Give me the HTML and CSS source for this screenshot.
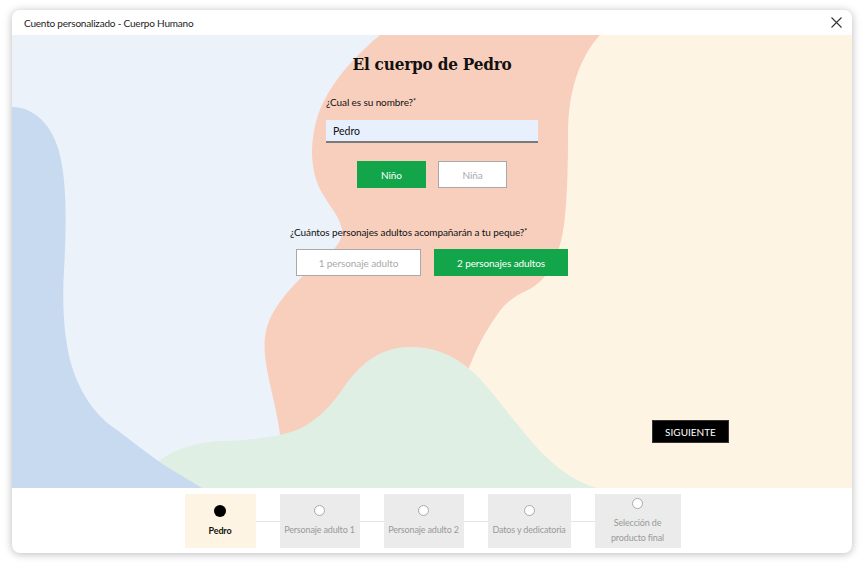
FILE: index.html
```html
<!DOCTYPE html>
<html>
<head>
    <title>Cuento personalizado - Cuerpo Humano</title>
    <link rel="stylesheet" href="styles.css">
</head>

<body>
    <div class="page">
        <div class="dialog">
            <div class="dialog-header">
                <span class="dialog-title">Cuento personalizado - Cuerpo Humano</span>
                <button class="close-btn" aria-label="Cerrar">
                    <svg width="11" height="11" viewBox="0 0 11 11">
                        <path d="M0.5 0.5 L10.5 10.5 M10.5 0.5 L0.5 10.5" stroke="#333" stroke-width="1.1" fill="none"/>
                    </svg>
                </button>
            </div>

            <div class="stage">
                <svg class="stage-art" viewBox="0 0 840 453" preserveAspectRatio="none">
                    <path fill="#F8CFBD" d="M368,0 C350,15 318,45 306,80 C298,105 298,130 306,150 C314,168 328,180 330,195 C332,215 300,230 282,250 C262,272 250,290 253,320 C256,350 268,380 270,420 L840,420 L840,0 Z"/>
                    <path fill="#FEF4E4" d="M588,0 C568,22 556,55 556,100 C556,150 554,190 548,210 C542,232 532,246 518,254 C505,260 494,266 485,280 C472,298 464,315 456,335 L430,453 L840,453 L840,0 Z"/>
                    <path fill="#E0EFE4" d="M90,453 L148,425 C165,413 185,407 210,406 C240,405 265,402 285,395 C305,386 318,372 330,355 C345,333 365,312 398,312 C425,312 445,322 462,338 C480,355 495,378 510,395 C530,420 555,445 585,453 Z"/>
                    <path fill="#C8DAF0" d="M0,72 C25,72 45,95 50,130 C55,160 54,200 52,235 C50,270 52,300 58,325 C66,355 82,380 105,395 C122,408 138,420 152,430 L190,453 L0,453 Z"/>
                </svg>

                <div class="stage-content">
                    <h1 class="book-title">El cuerpo de Pedro</h1>

                    <div class="field name-field">
                        <label for="kid-name">¿Cual es su nombre?<span class="req">*</span></label>
                        <input type="text" id="kid-name" value="Pedro">
                    </div>

                    <div class="choice-row gender-row">
                        <button class="choice choice-small active">Niño</button>
                        <button class="choice choice-small">Niña</button>
                    </div>

                    <div class="field adults-field">
                        <label>¿Cuántos personajes adultos acompañarán a tu peque?<span class="req">*</span></label>
                        <div class="choice-row adults-row">
                            <button class="choice choice-one">1 personaje adulto</button>
                            <button class="choice choice-two active">2 personajes adultos</button>
                        </div>
                    </div>

                    <div class="nav-row">
                        <button class="next-btn">SIGUIENTE</button>
                    </div>
                </div>
            </div>

            <div class="stepper">
                <div class="step step-1 current">
                    <span class="step-dot"></span>
                    <span class="step-label">Pedro</span>
                </div>
                <span class="step-line"></span>
                <div class="step step-2">
                    <span class="step-dot"></span>
                    <span class="step-label">Personaje adulto 1</span>
                </div>
                <span class="step-line"></span>
                <div class="step step-3">
                    <span class="step-dot"></span>
                    <span class="step-label">Personaje adulto 2</span>
                </div>
                <span class="step-line"></span>
                <div class="step step-4">
                    <span class="step-dot"></span>
                    <span class="step-label">Datos y dedicatoria</span>
                </div>
                <span class="step-line"></span>
                <div class="step step-5">
                    <span class="step-dot"></span>
                    <span class="step-label">Selección de<br>producto final</span>
                </div>
            </div>
        </div>
    </div>
</body>
</html>
```

FILE: styles.css
```css
body {
    margin: 0;
    background: #fff;
    font-family: Lato, "Open Sans", sans-serif;
    color: #111;
}

.page {
    padding: 10px 13px 14px 12px;
}

.dialog {
    width: 840px;
    height: 543px;
    background: #fff;
    border-radius: 8px;
    overflow: hidden;
    box-shadow: 0 1px 8px rgba(0, 0, 0, 0.28);
    display: flex;
    flex-direction: column;
}

.dialog-header {
    height: 25px;
    display: flex;
    align-items: center;
    justify-content: space-between;
    padding: 0 10px 0 12px;
    flex-shrink: 0;
}

.dialog-title {
    font-size: 10px;
    letter-spacing: -0.2px;
    color: #222;
}

.close-btn {
    border: none;
    background: none;
    padding: 0;
    width: 11px;
    height: 11px;
    display: flex;
}

/* ilustracion de fondo + formulario */
.stage {
    position: relative;
    height: 453px;
    background: #EBF2FA;
    flex-shrink: 0;
}

.stage-art {
    position: absolute;
    top: 0;
    left: 0;
    width: 100%;
    height: 100%;
}

.stage-content {
    position: relative;
    height: 100%;
    box-sizing: border-box;
    padding-top: 17px;
    display: flex;
    flex-direction: column;
    align-items: center;
}

.book-title {
    margin: 0;
    font-family: "DejaVu Serif Condensed", "DejaVu Serif", "Liberation Serif", serif;
    font-size: 17px;
    line-height: 24px;
    font-weight: bold;
    color: #111;
    letter-spacing: -0.2px;
}

.field label {
    display: block;
    font-size: 10px;
    line-height: 14px;
    letter-spacing: -0.1px;
    color: #111;
}

.req {
    font-size: 7px;
    vertical-align: 2px;
}

.name-field {
    width: 212px;
    margin-top: 18px;
}

.name-field input {
    display: block;
    box-sizing: border-box;
    width: 212px;
    height: 23px;
    margin-top: 11px;
    padding: 0 7px;
    border: none;
    border-bottom: 2px solid #7a7a7a;
    background: #E8F0FE;
    font-family: Lato, sans-serif;
    font-size: 10.5px;
    color: #111;
    outline: none;
}

.choice-row {
    display: flex;
    justify-content: center;
}

.gender-row {
    gap: 12px;
    margin-top: 18px;
}

.choice {
    box-sizing: border-box;
    height: 27px;
    border: 1px solid #a8a8a8;
    background: #fff;
    color: #aaa;
    font-family: Lato, sans-serif;
    font-size: 10px;
    letter-spacing: -0.1px;
    padding: 0;
}

.choice.active {
    background: #12A54A;
    border-color: #12A54A;
    color: #fff;
}

.choice-small {
    width: 69px;
}

.adults-field {
    width: 284px;
    margin-top: 36px;
}

.adults-row {
    gap: 13px;
    margin-top: 10px;
}

.choice-one {
    width: 125px;
}

.choice-two {
    width: 134px;
}

.nav-row {
    margin-top: auto;
    align-self: stretch;
    display: flex;
    justify-content: flex-end;
    padding: 0 123px 45px 0;
}

.next-btn {
    width: 77px;
    height: 23px;
    background: #000;
    border: 1px solid #333;
    color: #fff;
    font-family: Lato, sans-serif;
    font-size: 10px;
    padding: 0;
}

/* pasos */
.stepper {
    flex: 1;
    display: flex;
    justify-content: center;
    align-items: center;
    padding: 6px 0 5px 1px;
    box-sizing: border-box;
}

.step {
    height: 54px;
    box-sizing: border-box;
    background: #EBEBEB;
    display: flex;
    flex-direction: column;
    align-items: center;
    justify-content: center;
    gap: 6px;
}

.step-1 { width: 71px; }
.step-2 { width: 80px; }
.step-3 { width: 80px; }
.step-4 { width: 83px; }
.step-5 { width: 86px; }

.step.current {
    background: #FEF4E4;
}

.step-dot {
    width: 11px;
    height: 11px;
    box-sizing: border-box;
    border: 1px solid #aaa;
    border-radius: 50%;
    background: #fff;
}

.step.current .step-dot {
    width: 12px;
    height: 12px;
    border: none;
    background: #000;
}

.step-label {
    font-size: 9px;
    line-height: 15px;
    letter-spacing: -0.15px;
    color: #9a9a9a;
    text-align: center;
}

.step.current .step-label {
    color: #111;
    font-weight: bold;
}

.step-line {
    width: 24px;
    height: 1px;
    background: #e4e4e4;
}
```
